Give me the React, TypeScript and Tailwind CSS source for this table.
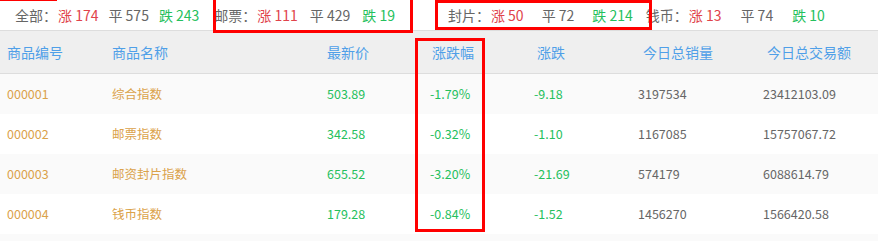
import React from "react";

const RED = "text-[#e0434b]";
const GREEN = "text-[#25c05d]";
const GRAY = "text-[#666666]";

type Stat = { label: string; up: number; flat: number; down: number; gap: string; start: string };

const stats: Stat[] = [
  { label: "全部：", up: 174, flat: 575, down: 243, gap: "ml-[10px]", start: "ml-[15px]" },
  { label: "邮票：", up: 111, flat: 429, down: 19, gap: "ml-[12px]", start: "ml-[15px]" },
  { label: "封片：", up: 50, flat: 72, down: 214, gap: "ml-[18px]", start: "ml-[53px]" },
  { label: "钱币：", up: 13, flat: 74, down: 10, gap: "ml-[19px]", start: "ml-[13px]" },
];

const rows = [
  { code: "000001", name: "综合指数", price: "503.89", pct: "-1.79%", chg: "-9.18", vol: "3197534", amt: "23412103.09" },
  { code: "000002", name: "邮票指数", price: "342.58", pct: "-0.32%", chg: "-1.10", vol: "1167085", amt: "15757067.72" },
  { code: "000003", name: "邮资封片指数", price: "655.52", pct: "-3.20%", chg: "-21.69", vol: "574179", amt: "6088614.79" },
  { code: "000004", name: "钱币指数", price: "179.28", pct: "-0.84%", chg: "-1.52", vol: "1456270", amt: "1566420.58" },
];

const cols = "grid grid-cols-[105px_215px_103px_104px_104px_125px_1fr]";

export default function App() {
  return (
    <div
      className="relative w-[878px] h-[241px] overflow-hidden bg-white"
      style={{ fontFamily: '"Noto Sans CJK SC", "Noto Sans", sans-serif' }}
    >
      {/* summary bar */}
      <div className="flex items-center h-[31px] border-b border-[#dddddd] text-[14px] whitespace-nowrap">
        {stats.map((s) => (
          <div key={s.label} className={`flex items-center ${s.start}`}>
            <span className={GRAY}>{s.label}</span>
            <span className={`${RED} ml-[1px]`}>涨 {s.up}</span>
            <span className={`${GRAY} ${s.gap}`}>平 {s.flat}</span>
            <span className={`${GREEN} ${s.gap}`}>跌 {s.down}</span>
          </div>
        ))}
      </div>

      {/* table header */}
      <div className={`${cols} h-[43px] items-center bg-[#efefef] border-b border-[#dddddd] text-[14px] text-[#4f9fe8]`}>
        <div className="pl-[7px]">商品编号</div>
        <div className="pl-[7px]">商品名称</div>
        <div className="pl-[7px]">最新价</div>
        <div className="pl-[9px]">涨跌幅</div>
        <div className="pl-[10px]">涨跌</div>
        <div className="pl-[12px]">今日总销量</div>
        <div className="pl-[11px]">今日总交易额</div>
      </div>

      {/* rows */}
      {rows.map((r, i) => (
        <div
          key={r.code}
          className={`${cols} h-[40px] items-center text-[12.5px] ${i % 2 === 0 ? "bg-[#fafafa]" : "bg-white"}`}
        >
          <div className="pl-[7px] text-[#dba24a]">{r.code}</div>
          <div className="pl-[7px] text-[#dba24a]">{r.name}</div>
          <div className={`pl-[7px] ${GREEN}`}>{r.price}</div>
          <div className={`pl-[7px] ${GREEN}`}>{r.pct}</div>
          <div className={`pl-[7px] ${GREEN}`}>{r.chg}</div>
          <div className={`pl-[7px] ${GRAY}`}>{r.vol}</div>
          <div className={`pl-[7px] ${GRAY}`}>{r.amt}</div>
        </div>
      ))}
      <div className="h-[10px] bg-[#fafafa]" />

      {/* annotation boxes */}
      <div className="absolute left-0 top-0 w-[57px] h-[1px] bg-[#ff0000]" />
      <div className="absolute left-[213px] top-[-3px] w-[200px] h-[36px] border-[3px] border-[#ff0000]" />
      <div className="absolute left-[435px] top-0 w-[217px] h-[30px] border-[3px] border-[#ff0000]" />
      <div className="absolute left-[415px] top-[38px] w-[70px] h-[194px] border-[3px] border-[#ff0000]" />
    </div>
  );
}
